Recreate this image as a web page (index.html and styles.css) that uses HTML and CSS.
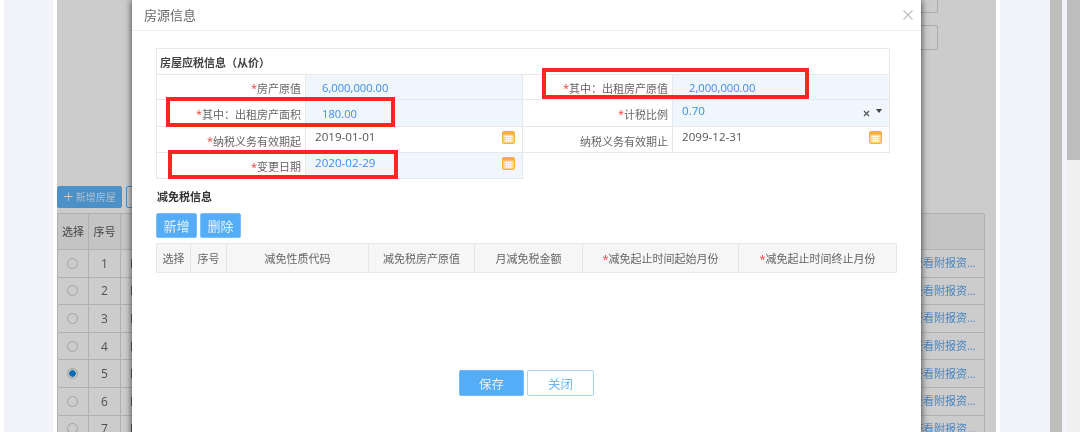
FILE: index.html
```html
<!DOCTYPE html>
<html lang="zh-CN">
<head>
<meta charset="utf-8">
<title>房源信息</title>
<link rel="stylesheet" href="styles.css">
</head>
<body>
<div class="page">
  <div class="gutter"></div>
  <div class="side"></div>
  <div class="gutter"></div>
  <main class="panel">
    <div class="fields">
      <div class="field field-top"></div>
      <div class="field"></div>
    </div>
    <div class="toolbar">
      <button class="tool tool-primary"><span class="plus">+</span>新增房屋</button>
      <button class="tool tool-outline"></button>
    </div>
    <div class="bg-table">
      <div class="bg-cell bg-head">选择</div><div class="bg-cell bg-head">序号</div><div class="bg-cell bg-head"></div><div class="bg-cell bg-head"></div>
      <div class="bg-cell bg-pick"><i class="radio"></i></div><div class="bg-cell">1</div><div class="bg-cell bg-left">F</div><div class="bg-cell bg-link"><span>查看附报资...</span></div>
      <div class="bg-cell bg-pick"><i class="radio"></i></div><div class="bg-cell">2</div><div class="bg-cell bg-left">F</div><div class="bg-cell bg-link"><span>查看附报资...</span></div>
      <div class="bg-cell bg-pick"><i class="radio"></i></div><div class="bg-cell">3</div><div class="bg-cell bg-left">F</div><div class="bg-cell bg-link"><span>查看附报资...</span></div>
      <div class="bg-cell bg-pick"><i class="radio"></i></div><div class="bg-cell">4</div><div class="bg-cell bg-left">F</div><div class="bg-cell bg-link"><span>查看附报资...</span></div>
      <div class="bg-cell bg-pick"><i class="radio radio-on"></i></div><div class="bg-cell">5</div><div class="bg-cell bg-left">F</div><div class="bg-cell bg-link"><span>查看附报资...</span></div>
      <div class="bg-cell bg-pick"><i class="radio"></i></div><div class="bg-cell">6</div><div class="bg-cell bg-left">F</div><div class="bg-cell bg-link"><span>查看附报资...</span></div>
      <div class="bg-cell bg-pick"><i class="radio"></i></div><div class="bg-cell">7</div><div class="bg-cell bg-left">F</div><div class="bg-cell bg-link"><span>查看附报资...</span></div>
    </div>
  </main>
  <div class="gutter"></div>
  <div class="side side-right"></div>
  <div class="rail"></div>
  <div class="rail-gap"></div>
  <div class="scrollbar"><div class="thumb"></div></div>
</div>

<section class="modal">
  <header class="modal-head">
    <h1 class="modal-title">房源信息</h1>
    <svg class="close" width="10" height="10" viewBox="0 0 10 10"><path d="M0.5 0.5L9.5 9.5M9.5 0.5L0.5 9.5" stroke="#bdbdbd" stroke-width="1.1" fill="none"/></svg>
  </header>
  <div class="modal-body">
    <div class="form">
      <div class="form-title">房屋应税信息（从价）</div>

      <div class="lbl"><em>*</em>房产原值</div>
      <div class="val req amount">6,000,000.00</div>
      <div class="lbl"><em>*</em>其中：出租房产原值</div>
      <div class="val req amount">2,000,000.00</div>

      <div class="lbl"><em>*</em>其中：出租房产面积</div>
      <div class="val req amount">180.00</div>
      <div class="lbl"><em>*</em>计税比例</div>
      <div class="val req plain up">0.70
        <span class="select-icons">
          <svg width="7" height="7" viewBox="0 0 7 7"><path d="M1 1L6 6M6 1L1 6" stroke="#555" stroke-width="1.2" fill="none"/></svg>
          <svg class="caret" width="6" height="4" viewBox="0 0 6 4"><path d="M0 0H6L3 4Z" fill="#444"/></svg>
        </span>
      </div>

      <div class="lbl lbl-low"><em>*</em>纳税义务有效期起</div>
      <div class="val plain dark up">2019-01-01
        <svg class="cal" width="13" height="13" viewBox="0 0 13 13"><rect x=".5" y=".5" width="12" height="12" rx="1.5" fill="#ffd27f" stroke="#f9ad3a"/><rect x="1" y="1" width="11" height="2.5" fill="#f9ad3a"/><path d="M2.5 5.5H10.5M2.5 7.7H10.5M2.5 9.9H10.5M4.6 4.5V11M6.5 4.5V11M8.4 4.5V11" stroke="#fff" stroke-width=".8" fill="none"/></svg>
      </div>
      <div class="lbl lbl-low">纳税义务有效期止</div>
      <div class="val plain dark up">2099-12-31
        <svg class="cal" width="13" height="13" viewBox="0 0 13 13"><rect x=".5" y=".5" width="12" height="12" rx="1.5" fill="#ffd27f" stroke="#f9ad3a"/><rect x="1" y="1" width="11" height="2.5" fill="#f9ad3a"/><path d="M2.5 5.5H10.5M2.5 7.7H10.5M2.5 9.9H10.5M4.6 4.5V11M6.5 4.5V11M8.4 4.5V11" stroke="#fff" stroke-width=".8" fill="none"/></svg>
      </div>

      <div class="lbl"><em>*</em>变更日期</div>
      <div class="val req plain up">2020-02-29
        <svg class="cal" width="13" height="13" viewBox="0 0 13 13"><rect x=".5" y=".5" width="12" height="12" rx="1.5" fill="#ffd27f" stroke="#f9ad3a"/><rect x="1" y="1" width="11" height="2.5" fill="#f9ad3a"/><path d="M2.5 5.5H10.5M2.5 7.7H10.5M2.5 9.9H10.5M4.6 4.5V11M6.5 4.5V11M8.4 4.5V11" stroke="#fff" stroke-width=".8" fill="none"/></svg>
      </div>
    </div>

    <h2 class="section-title">减免税信息</h2>
    <div class="actions">
      <button class="btn btn-add">新增</button>
      <button class="btn btn-del">删除</button>
    </div>
    <div class="relief">
      <div class="th">选择</div>
      <div class="th">序号</div>
      <div class="th">减免性质代码</div>
      <div class="th">减免税房产原值</div>
      <div class="th">月减免税金额</div>
      <div class="th"><em>*</em>减免起止时间起始月份</div>
      <div class="th"><em>*</em>减免起止时间终止月份</div>
    </div>
    <div class="footer">
      <button class="btn-save">保存</button>
      <button class="btn-close">关闭</button>
    </div>
  </div>
  <div class="mark mark-area"></div>
  <div class="mark mark-origin"></div>
  <div class="mark mark-date"></div>
</section>
</body>
</html>
```
FILE: styles.css
```css
* { box-sizing: border-box; }
html, body { margin: 0; padding: 0; height: 432px; overflow: hidden; background: #fff; }
body {
  font-family: "Open Sans", "Noto Sans CJK SC", sans-serif;
  font-size: 11px;
  color: #555;
  position: relative;
  filter: blur(0.5px);
}
button { font-family: inherit; padding: 0; cursor: pointer; }
em { font-style: normal; color: #f2403c; }

.page { display: flex; height: 432px; overflow: hidden; }
.gutter { width: 4px; flex: none; background: #fff; }
.side { width: 49px; flex: none; background: #f1f3f8; }
.side-right { width: 50px; }
.rail { width: 12px; flex: none; background: #bdbdbd; }
.rail-gap { width: 5px; flex: none; background: #f1f3f8; }
.scrollbar { width: 13px; flex: none; background: #f0f0f0; }
.thumb { height: 160px; background: #bdbdbd; }

.panel { position: relative; width: 939px; flex: none; height: 432px; overflow: hidden; background: #fff; padding-right: 12px; }
.panel::after { content: ""; position: absolute; inset: 0; background: rgba(0, 0, 0, .2); }

.fields { display: flex; flex-direction: column; align-items: flex-end; gap: 12px; padding-right: 46px; height: 186px; }
.field { width: 220px; height: 25px; flex: none; border: 1px solid #d8d8d8; border-radius: 2px; }
.field-top { margin-top: -12px; }

.toolbar { display: flex; gap: 4px; height: 27px; }
.tool { height: 22px; border-radius: 2px; font-size: 10px; padding-bottom: 2px; }
.tool-primary { width: 65px; background: #5eb4f8; border: 1px solid #5eb4f8; color: #d8ecff; }
.plus { font-size: 18px; font-weight: 300; line-height: 10px; margin-right: 2px; vertical-align: -2px; color: #fff; }
.tool-outline { width: 60px; background: #fff; border: 1px solid #5eb4f8; }

.bg-table { display: grid; grid-template-columns: 31px 32px 770px 94px; grid-template-rows: 36px repeat(7, 27.6px); border-top: 1px solid #ddd; border-left: 1px solid #ddd; }
.bg-cell { display: flex; align-items: center; justify-content: center; border-right: 1px solid #ddd; border-bottom: 1px solid #ddd; background: #fff; font-size: 12px; color: #666; min-width: 0; }
.bg-head { background: #f6f6f6; font-size: 11px; color: #555; padding-bottom: 2px; }
.bg-pick { padding-right: 2px; }
.bg-left { justify-content: flex-start; padding-left: 9px; }
.bg-link { justify-content: flex-start; padding: 0 0 2px 21px; }
.bg-link span { white-space: nowrap; color: #5ea9f2; font-size: 11px; }
.radio { width: 11px; height: 11px; border-radius: 50%; border: 1px solid #ccc; background: #fff; display: block; }
.radio-on { background: radial-gradient(circle, #0b8ae6 0 3px, #f4f4f4 3.5px); }

.modal { position: absolute; left: 132px; top: 0; width: 789px; height: 440px; background: #fff; box-shadow: 0 0 7px rgba(0, 0, 0, .75); }
.modal-head { display: flex; align-items: center; justify-content: space-between; height: 31px; padding: 0 8px 0 11px; border-bottom: 1px solid #eee; }
.modal-title { margin: 0 0 2px 1px; font-size: 13px; font-weight: 400; color: #666; }
.close { display: block; }
.modal-body { padding: 17px 0 0 24px; }

.form { display: grid; width: 734px; grid-template-columns: 149px 217px 150px 217px; grid-template-rows: 26px 25px 27px 26px 26px; border-top: 1px solid #e8e8e8; border-left: 1px solid #e8e8e8; }
.form-title { grid-column: 1 / -1; display: flex; align-items: center; padding-left: 3px; font-weight: 700; color: #444; border-right: 1px solid #e8e8e8; border-bottom: 1px solid #e8e8e8; }
.lbl { display: flex; align-items: center; justify-content: flex-end; padding: 1px 4px 0 0; border-right: 1px solid #e8e8e8; border-bottom: 1px solid #e8e8e8; color: #666; }
.lbl-low { padding-top: 2px; }
.val { position: relative; display: flex; align-items: center; justify-content: space-between; border-right: 1px solid #e8e8e8; border-bottom: 1px solid #e8e8e8; color: #3d8eea; padding-right: 7px; font-size: 11.6px; }
.req { background: #eff6fd; }
.amount { padding-left: 16px; padding-top: 1px; font-size: 11.2px; }
.plain { padding-left: 9px; }
.up { padding-bottom: 6px; }
.dark { color: #555; }
.cal { display: block; margin-top: 2px; }
.select-icons { display: flex; align-items: center; gap: 6px; padding-top: 6px; }
.caret { margin-top: -4px; }

.section-title { margin: 11px 0 0 1px; font-size: 11px; line-height: 14px; font-weight: 700; color: #333; }
.actions { display: flex; gap: 3px; margin-top: 9px; }
.btn { width: 41px; height: 25px; border: 1px solid #7cc0fa; border-radius: 2px; background: #55adf7; color: #e6f3ff; font-size: 13px; }
.relief { display: grid; grid-template-columns: 34px 36px 142px 106px 108px 156px 158px; height: 30px; margin-top: 5px; background: #f6f6f6; border: 1px solid #e8e8e8; border-right: 0; width: 741px; }
.th { display: flex; align-items: center; justify-content: center; border-right: 1px solid #e6e6e6; color: #666; }
.footer { display: flex; gap: 3px; margin: 97px 0 0 303px; }
.btn-save { width: 65px; height: 26px; background: #55adf7; border: 1px solid #6fb9f8; border-radius: 2px; color: #e6f3ff; font-size: 12.5px; }
.btn-close { width: 67px; height: 26px; background: #fff; border: 1px solid #a9d6fb; border-radius: 2px; color: #6cb6f5; font-size: 12.5px; }

.mark { position: absolute; border: 4px solid #fb2622; pointer-events: none; }
.mark-area { left: 34px; top: 97px; width: 229px; height: 30px; }
.mark-origin { left: 410px; top: 68px; width: 267px; height: 31px; }
.mark-date { left: 36px; top: 150px; width: 230px; height: 29px; }
```
